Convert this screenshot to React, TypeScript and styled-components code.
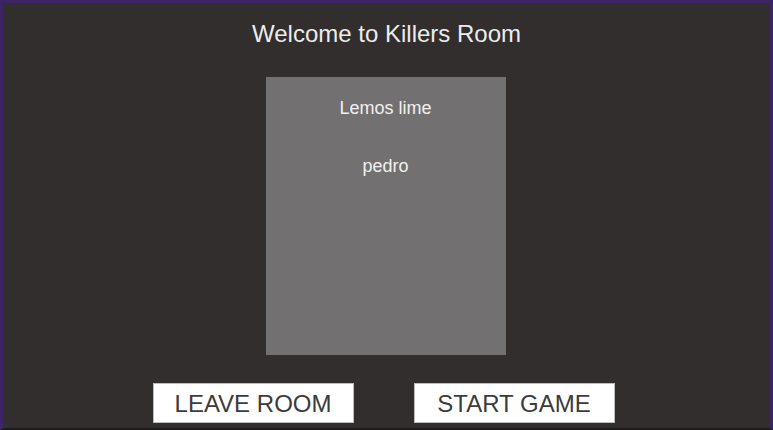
import React from "react";
import styled, { createGlobalStyle } from "styled-components";

const GlobalStyle = createGlobalStyle`
  html, body {
    margin: 0;
    padding: 0;
    background: #312e2d;
  }
  * {
    box-sizing: border-box;
  }
`

const Room = styled.div`
  width: 773px;
  height: 430px;
  display: flex;
  flex-direction: column;
  align-items: center;
  background: #312e2d;
  border: 3px solid #3d2466;
  border-bottom: 2px solid #1f1d1d;
  font-family: "Liberation Sans", Arial, sans-serif;
`

const Title = styled.h1`
  margin: 17px 0 0;
  font-size: 24px;
  font-weight: 400;
  line-height: 28px;
  color: #ececec;
`

const PlayerList = styled.ul`
  list-style: none;
  margin: 29px 2px 0 0;
  padding: 20px 0 0;
  width: 240px;
  height: 278px;
  background: #727070;
  display: flex;
  flex-direction: column;
  align-items: center;
  gap: 36px;
`

const Player = styled.li`
  font-size: 18px;
  line-height: 22px;
  color: #f0f0f0;
`

const Actions = styled.div`
  display: flex;
  gap: 60px;
  margin: 28px 6px 0 0;
`

const Button = styled.button`
  width: 201px;
  height: 40px;
  padding: 2px 0 0;
  background: #ffffff;
  border: 1px solid #bdbdbd;
  border-radius: 0;
  color: #3c3c3c;
  font-family: "Liberation Sans", Arial, sans-serif;
  font-size: 24px;
  cursor: pointer;
`

const players = ["Lemos lime", "pedro"]

const App = () => {
  return (
    <>
      <GlobalStyle />
      <Room>
        <Title>Welcome to Killers Room</Title>
        <PlayerList>
          {players.map(name => (
            <Player key={name}>{name}</Player>
          ))}
        </PlayerList>
        <Actions>
          <Button>LEAVE ROOM</Button>
          <Button>START GAME</Button>
        </Actions>
      </Room>
    </>
  );
};

export default App;
